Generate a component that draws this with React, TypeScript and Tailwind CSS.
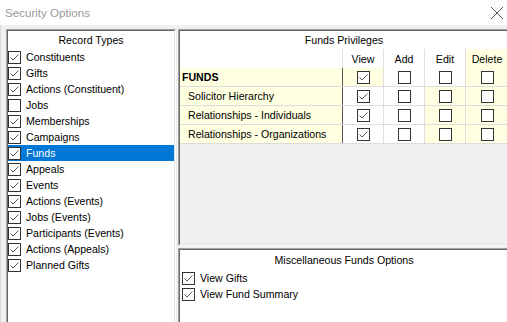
import React from 'react';

const recordTypes = [
    { name: 'Constituents', on: true },
    { name: 'Gifts', on: true },
    { name: 'Actions (Constituent)', on: true },
    { name: 'Jobs', on: false },
    { name: 'Memberships', on: true },
    { name: 'Campaigns', on: true },
    { name: 'Funds', on: true, selected: true },
    { name: 'Appeals', on: true },
    { name: 'Events', on: true },
    { name: 'Actions (Events)', on: true },
    { name: 'Jobs (Events)', on: true },
    { name: 'Participants (Events)', on: true },
    { name: 'Actions (Appeals)', on: true },
    { name: 'Planned Gifts', on: true },
];

// view, add, edit, delete
const privileges = [
    { name: 'FUNDS', bold: true, perms: [true, false, false, false] },
    { name: 'Solicitor Hierarchy', perms: [true, false, false, false] },
    { name: 'Relationships - Individuals', perms: [true, false, false, false] },
    { name: 'Relationships - Organizations', perms: [true, false, false, false] },
];

function CheckBox({ checked }: { checked: boolean }) {
    return (
        <span className="w-[13px] h-[13px] shrink-0 border border-[#333333] bg-white flex items-center justify-center">
            {checked && (
                <svg width="11" height="11" viewBox="0 0 11 11">
                    <path d="M1.5 5.5 L4 8 L9.5 2.5" fill="none" stroke="#5a5a5a" strokeWidth="1" />
                </svg>
            )}
        </span>
    );
}

// 3D sunken frame like a classic windows group box
function Sunken({ className, children }: { className?: string; children: React.ReactNode }) {
    return (
        <div className={`border border-t-[#a0a0a0] border-l-[#a0a0a0] border-r-white border-b-white ${className ?? ''}`}>
            <div className="w-full h-full border border-t-[#696969] border-l-[#696969] border-r-[#e3e3e3] border-b-[#e3e3e3] flex flex-col">
                {children}
            </div>
        </div>
    );
}

export default function App() {
    const colBg = (row: number, col: number) => {
        // cream cells in the permission grid
        if (row === 0) return col === 0 ? 'bg-[#ffffe1]' : col === 3 ? 'bg-[#ffffe1]' : 'bg-white';
        return col >= 2 ? 'bg-[#ffffe1]' : 'bg-white';
    };

    return (
        <div className="w-[507px] h-[322px] overflow-hidden bg-[#f0f0f0] font-['Liberation_Sans',Arial,sans-serif] text-[10.6px] text-black">
            <div className="h-[25px] bg-white flex items-center justify-between pl-[5px] pr-[3px]">
                <span className="text-[11.6px] text-[#999999]">Security Options</span>
                <svg width="14" height="14" viewBox="0 0 14 14">
                    <path d="M1 1 L13 13 M13 1 L1 13" stroke="#555555" strokeWidth="1" />
                </svg>
            </div>

            <div className="flex pt-[4px] pl-[5px] gap-[2px] border-l border-[#dadada]">
                <Sunken className="w-[170px] h-[300px] shrink-0">
                    <div className="flex-1 bg-white">
                        <div className="h-[18px] pt-[2px] flex items-center justify-center">Record Types</div>
                        {recordTypes.map(r => (
                            <div
                                key={r.name}
                                className={`h-[16px] flex items-center gap-[5px] ${r.selected ? 'bg-[#0078d7] text-white' : ''}`}
                            >
                                <CheckBox checked={r.on} />
                                <span className="pt-[2px]">{r.name}</span>
                            </div>
                        ))}
                    </div>
                </Sunken>

                <div className="flex flex-col gap-[2px] w-[332px] shrink-0">
                    <Sunken className="h-[217px]">
                        <div className="bg-white">
                            <div className="h-[18px] pt-[2px] flex items-center justify-center">Funds Privileges</div>
                            <div className="grid grid-cols-[163px_41px_41px_41px_1fr] h-[19px]">
                                <div className="border-r border-[#e0e0e0]"></div>
                                {['View', 'Add', 'Edit', 'Delete'].map((h, i) => (
                                    <div
                                        key={h}
                                        className={`pt-[2px] flex items-center justify-center ${i < 3 ? 'border-r border-[#e0e0e0]' : ''} ${i === 3 ? 'bg-[#ffffe1]' : 'bg-white'}`}
                                    >
                                        {h}
                                    </div>
                                ))}
                            </div>
                        </div>
                        <div className="flex-1">
                            {privileges.map((p, ri) => (
                                <div key={p.name} className="grid grid-cols-[163px_41px_41px_41px_1fr] h-[19px] border-b border-[#dcdcdc]">
                                    <div
                                        className={`bg-[#ffffe1] border-r border-[#555555] pt-[2px] flex items-center ${p.bold ? 'font-bold pl-[2px]' : 'pl-[8px]'}`}
                                    >
                                        {p.name}
                                    </div>
                                    {p.perms.map((v, ci) => (
                                        <div
                                            key={ci}
                                            className={`pt-[1px] flex items-center justify-center ${colBg(ri, ci)} ${ci < 3 ? 'border-r border-[#e0e0e0]' : ''}`}
                                        >
                                            <CheckBox checked={v} />
                                        </div>
                                    ))}
                                </div>
                            ))}
                        </div>
                    </Sunken>

                    <Sunken className="h-[100px]">
                        <div className="flex-1 bg-white">
                            <div className="h-[20px] pt-[2px] flex items-center justify-center">Miscellaneous Funds Options</div>
                            {['View Gifts', 'View Fund Summary'].map(o => (
                                <div key={o} className="h-[16px] flex items-center gap-[5px] pl-[2px]">
                                    <CheckBox checked={true} />
                                    <span className="pt-[2px]">{o}</span>
                                </div>
                            ))}
                        </div>
                    </Sunken>
                </div>
            </div>
        </div>
    );
}
